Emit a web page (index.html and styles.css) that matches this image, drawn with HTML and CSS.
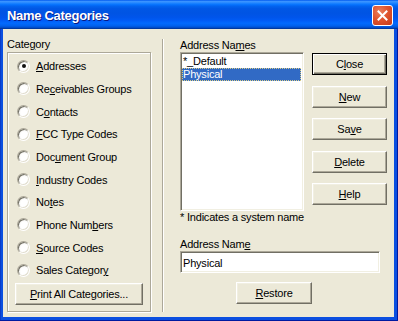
FILE: index.html
```html
<!DOCTYPE html>
<html>
<head>
<meta charset="utf-8">
<title>Name Categories</title>
<link rel="stylesheet" href="styles.css">
</head>
<body>
<div class="window">
  <div class="titlebar">
    <span class="title">Name Categories</span>
    <div class="close-btn"><svg width="11" height="11" viewBox="0 0 11 11"><path d="M1.5 1.5 L9.5 9.5 M9.5 1.5 L1.5 9.5" stroke="#fff" stroke-width="2" stroke-linecap="square" fill="none"/></svg></div>
  </div>
  <div class="body">
    <div class="left">
      <div class="label">Cate<u>g</u>ory</div>
      <div class="groupbox">
        <div class="radios">
          <div class="radio-row"><span class="radio checked"></span><span><u>A</u>ddresses</span></div>
          <div class="radio-row"><span class="radio"></span><span>Re<u>c</u>eivables Groups</span></div>
          <div class="radio-row"><span class="radio"></span><span>C<u>o</u>ntacts</span></div>
          <div class="radio-row"><span class="radio"></span><span><u>F</u>CC Type Codes</span></div>
          <div class="radio-row"><span class="radio"></span><span>Doc<u>u</u>ment Group</span></div>
          <div class="radio-row"><span class="radio"></span><span><u>I</u>ndustry Codes</span></div>
          <div class="radio-row"><span class="radio"></span><span>No<u>t</u>es</span></div>
          <div class="radio-row"><span class="radio"></span><span>Phone Num<u>b</u>ers</span></div>
          <div class="radio-row"><span class="radio"></span><span><u>S</u>ource Codes</span></div>
          <div class="radio-row"><span class="radio"></span><span>Sales Categor<u>y</u></span></div>
        </div>
        <div class="btn print"><u>P</u>rint All Categories...</div>
      </div>
    </div>
    <div class="sep"></div>
    <div class="right">
      <div class="label">Address Na<u>m</u>es</div>
      <div class="top-row">
        <div class="list field">
          <div class="list-item">*_Default</div>
          <div class="list-item selected">Physical</div>
        </div>
        <div class="buttons">
          <div class="btn default">C<u>l</u>ose</div>
          <div class="btn"><u>N</u>ew</div>
          <div class="btn">Sa<u>v</u>e</div>
          <div class="btn"><u>D</u>elete</div>
          <div class="btn"><u>H</u>elp</div>
        </div>
      </div>
      <div class="label note">* Indicates a system name</div>
      <div class="label name-label">Address Nam<u>e</u></div>
      <div class="input field">Physical</div>
      <div class="btn restore"><u>R</u>estore</div>
    </div>
  </div>
</div>
</body>
</html>
```

FILE: styles.css
```css
html, body {
  margin: 0;
  padding: 0;
}
body {
  width: 398px;
  height: 321px;
  overflow: hidden;
  font-family: "Liberation Sans", Arial, sans-serif;
  font-size: 11px;
  letter-spacing: -0.2px;
  color: #000;
}
u {
  text-decoration: underline;
  text-underline-offset: 1px;
}
.window {
  width: 398px;
  height: 321px;
  display: flex;
  flex-direction: column;
  background: #0B4FE0;
  box-shadow: inset -1px -1px 0 #0019A0, inset 1px 0 0 #0A3CC8;
}
.titlebar {
  height: 29px;
  flex: none;
  display: flex;
  align-items: flex-start;
  background: linear-gradient(to bottom, #0058EE 0%, #3A93FF 5%, #2A8BFF 9%, #127DFF 13%, #036FFC 17%, #0262EE 22%, #0057E5 30%, #0054E3 45%, #0055EB 60%, #005BF5 70%, #026AFE 80%, #0062EF 88%, #0052D6 94%, #0040AB 97%, #003092 100%);
}
.title {
  color: #fff;
  font-weight: bold;
  font-size: 13px;
  line-height: 16px;
  padding: 8px 0 0 7px;
  text-shadow: 1px 1px 0 #0A1883;
  letter-spacing: -0.3px;
}
.close-btn {
  margin: 5px 5px 0 auto;
  width: 21px;
  height: 21px;
  box-sizing: border-box;
  border: 1px solid #fff;
  border-radius: 3px;
  background: radial-gradient(circle at 35% 30%, #E9805F 0%, #E0542E 45%, #C4391A 100%);
  display: flex;
  align-items: center;
  justify-content: center;
}
.body {
  flex: 1;
  margin: 0 4px 4px 3px;
  background: #ECE9D8;
  display: flex;
}
.label {
  height: 13px;
  line-height: 13px;
  white-space: nowrap;
}
.left {
  width: 159px;
  flex: none;
  padding: 9px 0 0 4px;
  box-sizing: border-box;
}
.groupbox {
  margin-top: 1px;
  width: 144px;
  height: 260px;
  box-sizing: border-box;
  border: 1px solid #ACA899;
  box-shadow: inset 1px 1px 0 #fff, 1px 1px 0 #fff;
  padding-top: 2px;
}
.radios {
  padding-left: 9px;
}
.radio-row {
  height: 22.67px;
  display: flex;
  align-items: center;
  gap: 6px;
  white-space: nowrap;
}
.radio {
  width: 13px;
  height: 13px;
  box-sizing: border-box;
  border-radius: 50%;
  border: 1px solid;
  border-color: #ACA899 #fff #fff #ACA899;
  box-shadow: inset 1px 1px 0 #716F64, inset -1px -1px 0 #E2DFD0;
  background: radial-gradient(circle at 60% 60%, #fff 0%, #fff 40%, #E4E2D8 100%);
  flex: none;
  display: flex;
  align-items: center;
  justify-content: center;
}
.radio.checked::after {
  content: "";
  width: 4px;
  height: 4px;
  border-radius: 50%;
  background: #111;
}
.btn {
  box-sizing: border-box;
  height: 22px;
  background: #ECE9D8;
  border: 1px solid;
  border-color: #fff #716F64 #716F64 #fff;
  box-shadow: inset -1px -1px 0 #ACA899, inset 1px 1px 0 #F1EFE2;
  display: flex;
  align-items: center;
  justify-content: center;
  white-space: nowrap;
}
.btn.default {
  border-color: #000;
  box-shadow: inset 1px 1px 0 #fff, inset -1px -1px 0 #716F64, inset -2px -2px 0 #ACA899;
}
.print {
  margin: 1px 0 0 7px;
  width: 128px;
}
.sep {
  width: 2px;
  box-sizing: border-box;
  border-left: 1px solid #ACA899;
  border-right: 1px solid #fff;
  margin: 10px 0 5px 0;
  flex: none;
}
.right {
  padding: 10px 0 0 16px;
  flex: 1;
}
.top-row {
  display: flex;
  gap: 8px;
}
.field {
  box-sizing: border-box;
  border: 1px solid;
  border-color: #ACA899 #fff #fff #ACA899;
  box-shadow: inset 1px 1px 0 #716F64, inset -1px -1px 0 #F1EFE2;
  background: #fff;
}
.list {
  width: 124px;
  height: 159px;
  padding: 2px 2px 2px 1px;
}
.list-item {
  height: 13px;
  line-height: 13px;
  padding-left: 1px;
  white-space: nowrap;
}
.list-item.selected {
  background: #316AC5;
  color: #fff;
  outline: 1px dotted #D8CC88;
  outline-offset: -1px;
}
.buttons {
  margin-top: 1px;
  display: flex;
  flex-direction: column;
  gap: 10.5px;
}
.buttons .btn {
  width: 75px;
}
.name-label {
  margin-top: 14px;
}
.input {
  width: 200px;
  height: 22px;
  line-height: 18px;
  padding: 2px 2px 0 2px;
  white-space: nowrap;
}
.restore {
  margin: 9px 0 0 56px;
  width: 76px;
}
```
